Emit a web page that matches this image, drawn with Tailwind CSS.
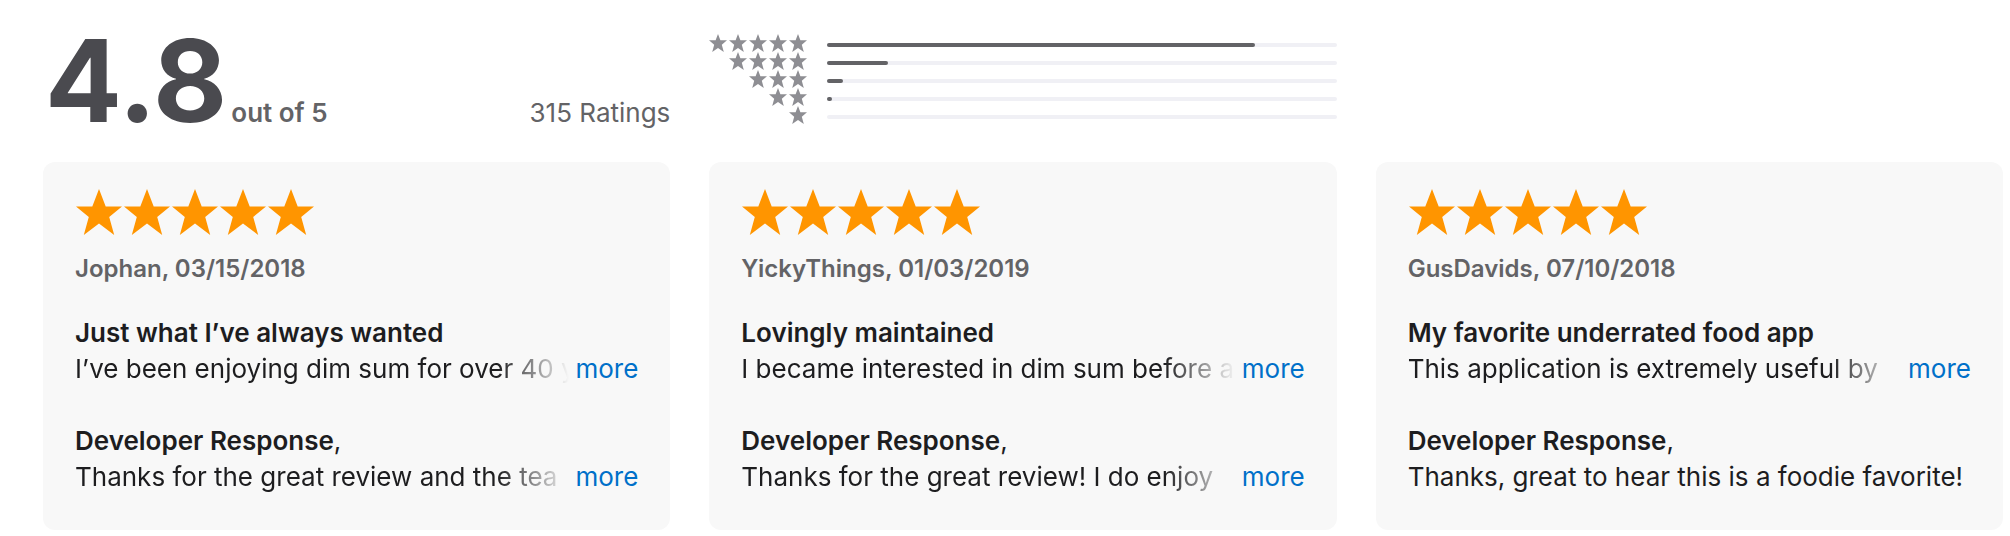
<!DOCTYPE html>
<html lang="en">
<head>
<meta charset="utf-8">
<title>Ratings and Reviews</title>
<script src="https://cdn.jsdelivr.net/npm/@tailwindcss/browser@4"></script>
</head>
<body class="bg-white font-['Inter',sans-serif] text-[26px] leading-9 text-[#1d1d1f]">
<svg class="hidden" aria-hidden="true">
  <symbol id="star" viewBox="0 0 46 46" preserveAspectRatio="none"><path d="M23 0L29.700 17.500H46L33.200 27.900L38.200 46L23 34.600L7.800 46L12.800 27.900L0 17.500H16.300Z"/></symbol>
  <symbol id="small-star" viewBox="0 0 18 18"><path d="M9 0L11.400 6.200H18L12.800 10.800L14.800 18L9 13.900L3.200 18L5.200 10.800L0 6.200H6.600Z"/></symbol>
  <symbol id="stars" viewBox="0 0 240 46">
    <use href="#star" x="1" width="46" height="46"/><use href="#star" x="49" width="46" height="46"/><use href="#star" x="97" width="46" height="46"/><use href="#star" x="145" width="46" height="46"/><use href="#star" x="193" width="46" height="46"/>
  </symbol>
</svg>
<main class="pt-6 pr-[7px] pb-1.5 pl-[43px]">
  <header class="grid grid-cols-3 gap-x-[39px] mb-6">
    <div class="flex items-baseline text-[#636366]">
      <strong class="pl-0.5 text-[114px] leading-none font-bold text-[#4a4a4f]">4.8</strong>
      <span class="ml-1 font-semibold">out of 5</span>
      <span class="ml-auto">315 Ratings</span>
    </div>
    <div class="pt-2.5 text-[#8e8e93]">
      <div class="flex h-[18px] items-center gap-5">
        <div class="flex w-[98px] shrink-0 justify-end gap-0.5" role="img" aria-label="5 stars"><svg class="size-[18px] fill-current"><use href="#small-star"/></svg><svg class="size-[18px] fill-current"><use href="#small-star"/></svg><svg class="size-[18px] fill-current"><use href="#small-star"/></svg><svg class="size-[18px] fill-current"><use href="#small-star"/></svg><svg class="size-[18px] fill-current"><use href="#small-star"/></svg></div>
        <div class="mt-1 h-1 flex-1 rounded-full bg-[#f0f0f5]"><div class="h-full rounded-full bg-[#636366]" style="width:84%"></div></div>
      </div>
      <div class="flex h-[18px] items-center gap-5">
        <div class="flex w-[98px] shrink-0 justify-end gap-0.5" role="img" aria-label="4 stars"><svg class="size-[18px] fill-current"><use href="#small-star"/></svg><svg class="size-[18px] fill-current"><use href="#small-star"/></svg><svg class="size-[18px] fill-current"><use href="#small-star"/></svg><svg class="size-[18px] fill-current"><use href="#small-star"/></svg></div>
        <div class="mt-1 h-1 flex-1 rounded-full bg-[#f0f0f5]"><div class="h-full rounded-full bg-[#636366]" style="width:12%"></div></div>
      </div>
      <div class="flex h-[18px] items-center gap-5">
        <div class="flex w-[98px] shrink-0 justify-end gap-0.5" role="img" aria-label="3 stars"><svg class="size-[18px] fill-current"><use href="#small-star"/></svg><svg class="size-[18px] fill-current"><use href="#small-star"/></svg><svg class="size-[18px] fill-current"><use href="#small-star"/></svg></div>
        <div class="mt-1 h-1 flex-1 rounded-full bg-[#f0f0f5]"><div class="h-full rounded-full bg-[#636366]" style="width:3%"></div></div>
      </div>
      <div class="flex h-[18px] items-center gap-5">
        <div class="flex w-[98px] shrink-0 justify-end gap-0.5" role="img" aria-label="2 stars"><svg class="size-[18px] fill-current"><use href="#small-star"/></svg><svg class="size-[18px] fill-current"><use href="#small-star"/></svg></div>
        <div class="mt-1 h-1 flex-1 rounded-full bg-[#f0f0f5]"><div class="h-full rounded-full bg-[#636366]" style="width:1%"></div></div>
      </div>
      <div class="flex h-[18px] items-center gap-5">
        <div class="flex w-[98px] shrink-0 justify-end gap-0.5" role="img" aria-label="1 star"><svg class="size-[18px] fill-current"><use href="#small-star"/></svg></div>
        <div class="mt-1 h-1 flex-1 rounded-full bg-[#f0f0f5]"></div>
      </div>
    </div>
  </header>
  <section class="grid grid-cols-3 gap-x-[39px]">
    <article class="min-w-0 rounded-xl bg-[#f8f8f8] px-8 pt-[27px] pb-[35px]">
      <svg class="h-[46px] w-60 fill-[#ff9500]" role="img" aria-label="5 out of 5"><use href="#stars"/></svg>
      <p class="mt-[18px] text-[24px] leading-8 font-semibold text-[#636366]">Jophan, 03/15/2018</p>
      <h3 class="mt-[30px] font-semibold">Just what I’ve always wanted</h3>
      <div class="flex gap-1.5">
        <p class="min-w-0 flex-1 overflow-hidden whitespace-nowrap mask-r-from-[calc(100%-72px)] mask-r-to-100%">I’ve been enjoying dim sum for over 40 ye</p>
        <button type="button" class="text-[#0070c9]">more</button>
      </div>
      <h4 class="mt-9"><span class="font-semibold">Developer Response</span>,</h4>
      <div class="flex gap-1.5">
        <p class="min-w-0 flex-1 overflow-hidden whitespace-nowrap mask-r-from-[calc(100%-72px)] mask-r-to-100%">Thanks for the great review and the tea</p>
        <button type="button" class="text-[#0070c9]">more</button>
      </div>
    </article>
    <article class="min-w-0 rounded-xl bg-[#f8f8f8] px-8 pt-[27px] pb-[35px]">
      <svg class="h-[46px] w-60 fill-[#ff9500]" role="img" aria-label="5 out of 5"><use href="#stars"/></svg>
      <p class="mt-[18px] text-[24px] leading-8 font-semibold text-[#636366]">YickyThings, 01/03/2019</p>
      <h3 class="mt-[30px] font-semibold">Lovingly maintained</h3>
      <div class="flex gap-1.5">
        <p class="min-w-0 flex-1 overflow-hidden whitespace-nowrap mask-r-from-[calc(100%-72px)] mask-r-to-100%">I became interested in dim sum before a f</p>
        <button type="button" class="text-[#0070c9]">more</button>
      </div>
      <h4 class="mt-9"><span class="font-semibold">Developer Response</span>,</h4>
      <div class="flex gap-1.5">
        <p class="min-w-0 flex-1 overflow-hidden whitespace-nowrap mask-r-from-[calc(100%-72px)] mask-r-to-100%">Thanks for the great review! I do enjoy</p>
        <button type="button" class="text-[#0070c9]">more</button>
      </div>
    </article>
    <article class="min-w-0 rounded-xl bg-[#f8f8f8] px-8 pt-[27px] pb-[35px]">
      <svg class="h-[46px] w-60 fill-[#ff9500]" role="img" aria-label="5 out of 5"><use href="#stars"/></svg>
      <p class="mt-[18px] text-[24px] leading-8 font-semibold text-[#636366]">GusDavids, 07/10/2018</p>
      <h3 class="mt-[30px] font-semibold">My favorite underrated food app</h3>
      <div class="flex gap-1.5">
        <p class="min-w-0 flex-1 overflow-hidden whitespace-nowrap mask-r-from-[calc(100%-72px)] mask-r-to-100%">This application is extremely useful by</p>
        <button type="button" class="text-[#0070c9]">more</button>
      </div>
      <h4 class="mt-9"><span class="font-semibold">Developer Response</span>,</h4>
      <p class="whitespace-nowrap">Thanks, great to hear this is a foodie favorite!</p>
    </article>
  </section>
</main>
</body>
</html>
